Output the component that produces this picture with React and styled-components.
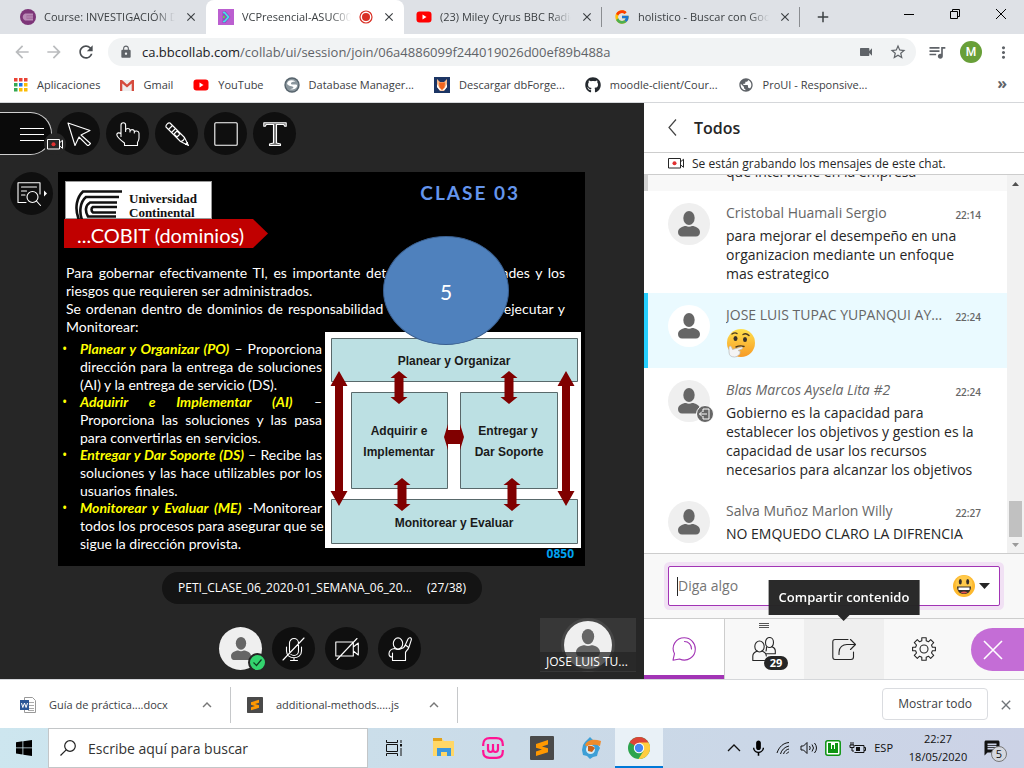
import React from "react";
import styled, { createGlobalStyle, css } from "styled-components";
import {
  MdArrowBack, MdArrowForward, MdRefresh, MdLock, MdVideocam, MdStarBorder,
  MdQueueMusic, MdMoreVert, MdPublic, MdClose, MdAdd, MdMic, MdMessage, MdKeyboardArrowUp,
} from "react-icons/md";
import { FcGoogle } from "react-icons/fc";
import { FaGithub } from "react-icons/fa";

const Global = createGlobalStyle`
  *, *::before, *::after { box-sizing: border-box; }
  body { margin: 0; background: #fff; }
  button, input { font: inherit; color: inherit; border: 0; background: none; padding: 0; margin: 0; outline: 0; }
  button { cursor: pointer; }
  a { color: inherit; text-decoration: none; }
  svg { display: block; flex: none; }
  p, ul, h1, h2 { margin: 0; padding: 0; font-weight: inherit; font-size: inherit; }
`;

const ui = '"Open Sans", "Noto Sans", sans-serif';
const chatFont = '"Open Sans", "Noto Sans", sans-serif';
const slideFont = 'Lato, "Open Sans", sans-serif';
const hair = { fill: "none", stroke: "currentColor", strokeWidth: 1.1, strokeLinejoin: "round", strokeLinecap: "round" };

const Screen = styled.div`
  min-height: 100vh;
  display: flex;
  flex-direction: column;
  font: 11px/16px ${ui};
  color: #3c4043;
`;

/* ---------- browser chrome ---------- */
const TabStrip = styled.div`
  display: flex;
  height: 34px;
  background: #dee1e6;
  padding-left: 8px;
`;
const Tab = styled.div`
  flex: 0 1 198px;
  min-width: 0;
  display: flex;
  align-items: center;
  gap: 8px;
  padding: 0 7px 0 12px;
  ${(p) => p.$active && css`background: #fff; border-radius: 8px 8px 0 0;`}
  ${(p) => p.$divider && css`
    background: linear-gradient(#8a8d91, #8a8d91) right center / 1px 20px no-repeat;
  `}
`;
const TabTitle = styled.span`
  flex: 1;
  min-width: 0;
  overflow: hidden;
  white-space: nowrap;
  mask-image: linear-gradient(to left, transparent, #000 20px);
`;
const IconButton = styled.button`
  display: flex;
  align-items: center;
  justify-content: center;
  width: ${(p) => p.$w || 16}px;
  height: ${(p) => p.$h || 16}px;
  flex: none;
  color: ${(p) => p.$color || "#3c4043"};
`;
const WindowButtons = styled.div`
  margin-left: auto;
  display: flex;
`;
const Toolbar = styled.div`
  display: flex;
  align-items: center;
  height: 36px;
  padding: 0 8px 0 6px;
  background: #fff;
`;
const AddressBar = styled.div`
  flex: 1;
  display: flex;
  align-items: center;
  height: 28px;
  margin: 0 5px 0 6px;
  padding: 0 2px 0 11px;
  border-radius: 14px;
  background: #f1f3f4;
`;
const Url = styled.div`
  flex: 1;
  margin-left: 9px;
  font: 13px/20px ${ui};
  color: #5f6368;
  outline: 0;
  white-space: nowrap;
  overflow: hidden;
  b { font-weight: 400; color: #202124; }
`;
const Profile = styled.button`
  width: 22px;
  height: 22px;
  margin: 0 8px 0 7px;
  border-radius: 50%;
  background: #689f38;
  color: #fff;
  font: 500 12px/22px Roboto, sans-serif;
`;
const Bookmarks = styled.nav`
  display: flex;
  align-items: center;
  height: 33px;
  padding: 0 17px 3px 14px;
  border-bottom: 1px solid #d5d7da;
  gap: 20px;
`;
const Bookmark = styled.a`
  display: flex;
  align-items: center;
  gap: 9px;
  white-space: nowrap;
`;
const More = styled.button`
  margin-left: auto;
  font: 700 16px/16px ${ui};
  color: #5f6368;
  padding-bottom: 3px;
`;

/* ---------- session ---------- */
const Session = styled.main`
  flex: 1;
  display: flex;
  background: #262626;
`;
const Stage = styled.section`
  flex: 1;
  min-width: 0;
  display: flex;
  flex-direction: column;
  color: #fff;
`;
const Tools = styled.div`
  display: flex;
  gap: 6px;
  padding-top: 9px;
`;
const Round = styled.button`
  position: relative;
  display: flex;
  align-items: center;
  justify-content: center;
  flex: none;
  width: 43px;
  height: 43px;
  border-radius: 50%;
  color: #fff;
  background: ${(p) => (p.$light ? "#efefef" : "#0f0f0f")};
`;
const MenuButton = styled.button`
  position: relative;
  width: 52px;
  height: 43px;
  margin-right: -1px;
  padding-left: 20px;
  color: #fff;
  background: #0a0a0a;
  border: 1px solid #cfcfcf;
  border-left: 0;
  border-radius: 0 22px 22px 0;
`;
const RecBadge = styled.span`
  position: absolute;
  z-index: 1;
  left: 44px;
  top: 20px;
  width: 22px;
  height: 22px;
  border-radius: 50%;
  background: #262626;
  display: flex;
  align-items: center;
  justify-content: center;
`;
const SlideRow = styled.div`
  display: flex;
  align-items: flex-start;
  gap: 5px;
  padding: 17px 59px 0 10px;
`;
const Slide = styled.article`
  position: relative;
  flex: 1;
  min-width: 0;
  padding: 9px 4px 6px 6px;
  background: #000;
  font: 14px/18px ${slideFont};
`;
const SlideTop = styled.header`
  display: flex;
  justify-content: space-between;
  padding: 0 61px 0 1px;
  height: 38px;
  overflow: hidden;
`;
const Brand = styled.div`
  display: flex;
  gap: 6px;
  width: 147px;
  padding: 8px 0 0 9px;
  background: #fff;
  border: 1px solid #999;
  color: #111;
  font: 700 13px/14px "Liberation Serif", serif;
`;
const BrandName = styled.span`
  padding-top: 2px;
`;
const ClassTitle = styled.h2`
  font: 700 19px/24px ${slideFont};
  letter-spacing: 2px;
  color: #6495ed;
`;
const Banner = styled.h1`
  width: 204px;
  height: 29px;
  padding-left: 13px;
  background: #c00000;
  clip-path: polygon(0 0, 189px 0, 100% 50%, 189px 100%, 0 100%);
  font: 20px/32px ${slideFont};
  white-space: nowrap;
`;
const Intro = styled.p`
  padding: 16px 16px 0 2px;
`;
const Line = styled.span`
  display: block;
  white-space: nowrap;
  text-align-last: ${(p) => (p.$loose ? "left" : "justify")};
`;
const SlideBody = styled.div`
  display: grid;
  grid-template-columns: minmax(0, 1fr) 256px;
  gap: 3px;
`;
const Domains = styled.ul`
  list-style: none;
  padding-top: 4px;
`;
const Domain = styled.li`
  display: flex;
  & + & { margin-top: -1px; }
  &::before { content: "•"; flex: none; width: 18px; margin-left: -2px; color: #ff0; font-family: "Open Sans", sans-serif; }
  div { flex: 1; min-width: 0; }
  em { font-weight: 700; color: #ff0; }
`;
const Figure = styled.div`
  margin-top: -4px;
`;
const Code = styled.div`
  padding-right: 7px;
  text-align: right;
  font: 700 12px/12px "Open Sans", sans-serif;
  color: #00a2f2;
`;
const Bubble = styled.div`
  position: absolute;
  left: 325px;
  top: 64px;
  width: 126px;
  height: 109px;
  border-radius: 50%;
  border: 1px solid #3a5f8f;
  background: #4f81bd;
  text-align: center;
  font: 21px/110px ${slideFont};
`;
const FileName = styled.button`
  align-self: center;
  display: flex;
  gap: 15px;
  height: 32px;
  margin-top: 6px;
  padding: 0 16px;
  align-items: center;
  border-radius: 16px;
  background: #141414;
  color: #fff;
  font: 12px/16px ${chatFont};
`;
const Controls = styled.div`
  display: grid;
  grid-template-columns: 1fr auto 1fr;
  align-items: start;
  padding: 14px 8px 6px 4px;
`;
const ControlGroup = styled.div`
  grid-column: 2;
  display: flex;
  gap: 10px;
  padding-top: 9px;
`;
const Check = styled.span`
  position: absolute;
  right: -5px;
  bottom: -2px;
  width: 19px;
  height: 19px;
  border-radius: 50%;
  border: 2px solid #262626;
  background: #33d46e;
`;
const Thumb = styled.div`
  justify-self: end;
  width: 96px;
  height: 54px;
  background: #373737;
  display: flex;
  flex-direction: column;
  align-items: center;
  padding-top: 3px;
`;
const ThumbFace = styled.div`
  width: 48px;
  height: 48px;
  border-radius: 50%;
  background: #efefef;
  box-shadow: 0 0 0 3px #464646;
  display: flex;
  justify-content: center;
  padding-top: 8px;
`;
const ThumbName = styled.div`
  position: relative;
  align-self: stretch;
  margin-top: -17px;
  padding-left: 6px;
  background: rgba(38, 38, 38, 0.75);
  font: 12px/19px ${chatFont};
`;

/* ---------- chat ---------- */
const Panel = styled.aside`
  width: 380px;
  flex: none;
  display: flex;
  flex-direction: column;
  background: #fff;
  color: #262626;
  font-family: ${chatFont};
`;
const PanelHead = styled.header`
  display: flex;
  align-items: center;
  gap: 17px;
  height: 50px;
  padding-left: 23px;
  border-bottom: 1px solid #cdcdcd;
  font: 600 16px/22px ${chatFont};
`;
const RecNote = styled.p`
  display: flex;
  align-items: center;
  gap: 8px;
  height: 22px;
  padding-left: 24px;
  border-bottom: 1px solid #cdcdcd;
  font: 12px/16px ${chatFont};
`;
const ChatArea = styled.div`
  flex: 1;
  display: flex;
`;
const Messages = styled.div`
  flex: 1;
  min-width: 0;
`;
const Clipped = styled.div`
  display: flex;
  align-items: flex-end;
  height: 16px;
  overflow: hidden;
  padding: 0 0 10px 78px;
  border-left: 4px solid #d2d2d2;
  background: #f8f8f8;
  font-size: 14px;
  line-height: 19px;
`;
const Message = styled.article`
  display: flex;
  gap: 16px;
  padding: 12px 26px 10px 20px;
  border-left: 4px solid ${(p) => (p.$own ? "#26cfff" : "#fff")};
  background: ${(p) => (p.$own ? "#eafaff" : "#fff")};
`;
const Avatar = styled.div`
  position: relative;
  flex: none;
  width: 42px;
  height: 42px;
  border-radius: 50%;
  background: ${(p) => (p.$own ? "#fff" : "#efefef")};
  display: flex;
  justify-content: center;
  padding-top: 8px;
`;
const LeftBadge = styled.span`
  position: absolute;
  right: -4px;
  bottom: -1px;
  width: 18px;
  height: 18px;
  border-radius: 50%;
  border: 1px solid #fff;
  background: #666;
`;
const MessageMain = styled.div`
  flex: 1;
  min-width: 0;
  font-size: 14px;
  line-height: 19px;
`;
const MessageHead = styled.div`
  display: flex;
  align-items: center;
  gap: 12px;
  height: 19px;
  margin-bottom: 4px;
`;
const Author = styled.span`
  flex: 1;
  min-width: 0;
  overflow: hidden;
  text-overflow: ellipsis;
  white-space: nowrap;
  color: #666;
  font-style: ${(p) => (p.$gone ? "italic" : "normal")};
`;
const Time = styled.time`
  padding-top: 4px;
  font: 600 10px/16px ${chatFont};
  color: #666;
`;
const Scrollbar = styled.div`
  width: 17px;
  display: flex;
  flex-direction: column;
  align-items: center;
  justify-content: space-between;
  padding: 7px 0 6px;
  background: #f1f1f1;
`;
const ScrollEnd = styled.div`
  display: flex;
  flex-direction: column;
  align-items: center;
  gap: 6px;
`;
const ScrollThumb = styled.div`
  width: 13px;
  height: 36px;
  background: #c1c1c1;
`;
const Composer = styled.div`
  padding: 12px 24px;
  border-top: 1px solid #cdcdcd;
  background: #f8f8f8;
`;
const Field = styled.label`
  display: flex;
  align-items: center;
  height: 40px;
  padding: 0 9px 0 8px;
  border: 1px solid #a234b5;
  border-radius: 2px;
  background: #fff;
  box-shadow: 0 0 0 4px #f1e1f4;
  font-size: 14px;
  &::before { content: ""; width: 1px; height: 19px; background: #262626; }
`;
const TextInput = styled.input`
  flex: 1;
  min-width: 0;
  height: 24px;
  line-height: 24px;
  &::placeholder { color: #757575; opacity: 1; }
`;
const EmojiButton = styled.button`
  display: flex;
  align-items: center;
  gap: 4px;
`;
const PanelTabs = styled.div`
  display: flex;
  height: 61px;
  border-top: 1px solid #cdcdcd;
  background: #f8f8f8;
`;
const PanelTab = styled.button`
  position: relative;
  width: 80px;
  display: flex;
  align-items: center;
  justify-content: center;
  color: ${(p) => (p.$active ? "#a234b5" : "#262626")};
  background: ${(p) => (p.$active ? "#fff" : p.$hover ? "#efefef" : "transparent")};
  ${(p) => p.$active && css`box-shadow: inset 0 -4px #a234b5, 1px 0 #cdcdcd;`}
`;
const Count = styled.span`
  position: absolute;
  left: 40px;
  top: 37px;
  width: 24px;
  height: 14px;
  border-radius: 7px;
  background: #262626;
  color: #fff;
  font: 700 11px/14px ${chatFont};
`;
const Grip = styled.span`
  position: absolute;
  top: 4px;
  left: 35px;
  width: 10px;
  height: 5px;
  border-top: 1px solid #555;
  border-bottom: 1px solid #555;
  &::after { content: ""; display: block; height: 1px; margin-top: 1px; background: #555; }
`;
const Tooltip = styled.span`
  position: absolute;
  bottom: 64px;
  left: 50%;
  transform: translateX(-50%);
  padding: 0 10px;
  background: #262626;
  color: #fff;
  white-space: nowrap;
  font: 600 13px/35px ${chatFont};
  opacity: 0.98;
  &::after {
    content: "";
    position: absolute;
    top: 100%;
    left: 50%;
    margin-left: -6px;
    border: 6px solid transparent;
    border-top-color: #262626;
    border-bottom: 0;
  }
`;
const ClosePanel = styled.button`
  margin: 9px 0 0 auto;
  width: 53px;
  height: 43px;
  padding-left: 10px;
  border-radius: 22px 0 0 22px;
  background: #c46dd6;
  color: #fff;
`;

/* ---------- downloads and taskbar ---------- */
const Downloads = styled.div`
  display: flex;
  align-items: center;
  height: 49px;
  padding: 2px 10px 0 0;
  border-top: 1px solid #d5d7da;
  background: #fff;
`;
const Download = styled.div`
  display: flex;
  align-items: center;
  gap: 13px;
  flex: 0 1 ${(p) => p.$w}px;
  height: 36px;
  padding: 0 15px 0 ${(p) => p.$left}px;
  border-right: 1px solid #c6c8ca;
  white-space: nowrap;
  button { margin-left: auto; }
`;
const ShowAll = styled.button`
  height: 32px;
  margin: 0 10px 2px auto;
  padding: 0 15px;
  border: 1px solid #dadce0;
  border-radius: 4px;
  font-size: 12px;
`;
const Taskbar = styled.footer`
  display: flex;
  align-items: stretch;
  height: 40px;
  color: #111;
  background: linear-gradient(100deg, #cde6ef, #cadbe8 50%, #ccd2e6);
`;
const SearchBox = styled.label`
  flex: 0 1 320px;
  display: flex;
  align-items: center;
  gap: 12px;
  padding: 0 11px;
  border: 1px solid #c3c6c8;
  background: #fff;
  font: 14px/20px ${ui};
`;
const SearchInput = styled.input`
  flex: 1;
  min-width: 0;
  height: 24px;
  &::placeholder { color: #333; opacity: 1; }
`;
const TaskButton = styled.button`
  display: flex;
  align-items: center;
  justify-content: center;
  width: ${(p) => p.$w || 49}px;
  ${(p) => p.$active && css`background: #e9f1f7; box-shadow: inset 0 -2px #0078d7;`}
`;
const Tray = styled.div`
  margin-left: auto;
  display: flex;
  align-items: center;
  gap: 8px;
`;
const Clock = styled.time`
  width: 74px;
  text-align: center;
  font: 11px/18px ${ui};
`;
const Notices = styled.button`
  position: relative;
  width: 34px;
  margin-right: 7px;
  color: #111;
`;
const NoticeCount = styled.span`
  position: absolute;
  left: 8px;
  top: 7px;
  width: 16px;
  height: 16px;
  border-radius: 50%;
  border: 1px solid #777;
  background: #d5d8e0;
  font: 11px/14px ${ui};
`;

/* ---------- drawings ---------- */
const Person = ({ w = 22, fill = "#666" }) => (
  <svg width={w} height={w * 1.18} viewBox="0 0 22 26" fill={fill}>
    <ellipse cx="11" cy="7" rx="5.700" ry="7" />
    <path d="M0 21C0 17.500 4.500 15 8 15c1.500.9 4.500.9 6 0C17.500 15 22 17.500 22 21c0 3-1.500 4.500-4 4.500H4C1.500 25.500 0 24 0 21Z" />
  </svg>
);
const RecIcon = ({ color = "#fff" }) => (
  <svg width="16" height="11" viewBox="0 0 16 11" fill="none" stroke={color}>
    <path d="M.5.500h12v9.500H.500zM12.500 3.800l3-2.500v8l-3-2.500" />
    <circle cx="6.500" cy="5.300" r="2" fill="#e03030" stroke="none" />
  </svg>
);
const YouTube = () => (
  <svg width="16" height="16" viewBox="0 0 16 16">
    <rect x=".5" y="2.500" width="15" height="11" rx="3" fill="#f00" />
    <path d="M6.500 5.500v5l4-2.500z" fill="#fff" />
  </svg>
);
const Apps = () => (
  <svg width="14" height="14" viewBox="0 0 14 14">
    {["#ea4335", "#ea4335", "#ea4335", "#34a853", "#1a73e8", "#fbbc04", "#34a853", "#fbbc04", "#fbbc04"].map((c, i) => (
      <rect key={i} x={(i % 3) * 5} y={Math.floor(i / 3) * 5} width="3.500" height="3.500" fill={c} />
    ))}
  </svg>
);
const Gmail = () => (
  <svg width="14" height="16" viewBox="0 0 14 16">
    <path d="M0 3h14v11H0z" fill="#eee" />
    <path d="M0 3h2l5 4.500L12 3h2v11h-2.300V6.500L7 10.500 2.300 6.500V14H0z" fill="#d54b3d" />
  </svg>
);
const Swirl = () => (
  <svg width="16" height="16" viewBox="0 0 16 16">
    <circle cx="8" cy="8" r="7.700" fill="#56636c" />
    <circle cx="8" cy="8" r="6.300" fill="#8b979e" />
    <path d="M3 7c0-4 5-5 8.500-2.500C8 4.500 6.500 5.500 7 7c1.500 1.500 4-.500 6 1 .5 3-3 5.500-7.500 4C9 12 10 11 9 9.800 7 8.800 5 9.500 3 7z" fill="#fff" />
  </svg>
);
const Fox = () => (
  <svg width="16" height="16" viewBox="0 0 16 16">
    <path d="M0 0h16v16H0z" fill="#1c3564" />
    <path d="M3 2l3 3h4l3-3v8l-3 4H6l-3-4z" fill="#f6b98c" />
    <path d="M5 5.500h6l-.5 5L8 13l-2.500-2.500z" fill="#f0641e" />
    <path d="M3 7l2.500 4L8 13.500 5.500 13 3 10zM13 7l-2.500 4L8 13.500l2.500-.500L13 10z" fill="#fff" />
  </svg>
);
const CourseIcon = () => (
  <svg width="16" height="16" viewBox="0 0 16 16">
    <circle cx="8" cy="8" r="8" fill="#7d3578" />
    <path d="M5 4.500h8v7H5C2 10 2 6 5 4.500z" fill="#b98ab6" />
    <path d="M13 6.500H6.500M13 8H6M13 9.500H6.500" stroke="#9a5f96" strokeWidth=".6" />
  </svg>
);
const CollabIcon = () => (
  <svg width="16" height="16" viewBox="0 0 16 16">
    <path d="M0 0h16v16H0z" fill="#bb5fd0" />
    <path d="M4.500 2.500l3-.500 5 6-5 6h-3z" fill="#8f4fc0" />
    <path d="M5 3.500h1.500l4 4.500-4 4.500H5" fill="none" stroke="#40e8e8" strokeWidth="1.700" />
    <path d="M5 6.500l2.500 1.500L5 9.500z" fill="#5be03b" />
  </svg>
);
const Sublime = ({ s = 24 }) => (
  <svg width={s} height={s} viewBox="0 0 24 24">
    <rect width="24" height="24" rx="1" fill="#4a4a4a" />
    <path d="M18 4v4.500l-6 2 6 1.800v4L6 20v-4.500l6-2-6-1.800V8z" fill="#ff9800" />
  </svg>
);
const Univ = () => (
  <svg width="48" height="30" viewBox="0 0 48 30" fill="none" stroke="#111" strokeWidth="2.600">
    <path d="M47 1.500H8C2 7-1 18 4 30M44 7H11C5 12 4 22 7 30M42 12.500H15c-5 3-5 9-2 14h28M42 17H18c-2 1-2 4 0 5.500h23" />
  </svg>
);

const Diagram = () => {
  const box = { fill: "#bce0e3", stroke: "#59696b", strokeWidth: 1 };
  const vert = (x, y, h, hw, hh, bw) => (
    <path
      d={`M${x} ${y}L${x + hw} ${y + hh}H${x + bw}V${y + h - hh}H${x + hw}L${x} ${y + h}L${x - hw} ${y + h - hh}H${x - bw}V${y + hh}H${x - hw}Z`}
      fill="#800000"
    />
  );
  return (
    <svg width="256" height="216" viewBox="0 0 256 216">
      <path d="M0 0h256v216H0z" fill="#fff" />
      <g {...box}>
        <path d="M6.500 6.500h246v43h-246zM26.500 60.500h96v96h-96zM135.500 60.500h97v96h-97zM6.500 167.500h246v44h-246z" />
      </g>
      {vert(14, 39, 135, 8.5, 15, 4)}
      {vert(241, 39, 135, 8.5, 15, 4)}
      {vert(74, 39, 33, 8.5, 7, 4.5)}
      {vert(184, 39, 33, 8.5, 7, 4.5)}
      {vert(77, 146, 33, 8.5, 7, 4.5)}
      {vert(187, 146, 33, 8.5, 7, 4.5)}
      <path d="M119 105l4-13v6h12v-6l4 13-4 13v-6h-12v6z" fill="#800000" />
      <g fontFamily='"Liberation Sans", sans-serif' fontWeight="700" fontSize="12" textAnchor="middle" fill="#1a1a1a">
        <text x="129" y="33">Planear y Organizar</text>
        <text x="74" y="103">Adquirir e</text>
        <text x="74" y="124">Implementar</text>
        <text x="183" y="103">Entregar y</text>
        <text x="184" y="124">Dar Soporte</text>
        <text x="129" y="195">Monitorear y Evaluar</text>
      </g>
    </svg>
  );
};

const tools = [
  ["Seleccionar", <path d="M1 1l22 7.500-9 4.500 9.500 8.500-2.500 2.500-9-9L8 23.500z" />],
  ["Apuntador", <path d="M5 14.500V3a2.300 2.300 0 0 1 4.600 0v6.500V8c.6-2 4-2 4.400 0v2-1c.6-1.800 3.800-1.800 4.300 0v2-1c.7-1.500 4.200-1.300 4.700 1V16c0 2-.8 3.500-1.500 4.500V23.500H8.500v-2.500C5 18.500 1 14.500.8 12.800.8 10.800 3.500 10 5 12" />],
  ["Lápiz", <><path d="M1 5C.500 3 3 .500 5 1L19.500 15.500l4 8-8-4z" /><path d="M3.500 7.500l4-4M15.500 19.500c2 0 4-2 4-4M6.500 10.500l4-4M9 12l3 3 3-3-3-3zM20.500 22.500l2-2" /></>],
  ["Forma", <rect x=".8" y=".8" width="22.400" height="22.400" rx="1" />],
];

const Fig = ({ children, s = 24 }) => <svg width={s} height={s} viewBox="0 0 24 24" {...hair}>{children}</svg>;

const Thinking = () => (
  <svg width="30" height="30" viewBox="0 0 30 30">
    <defs>
      <linearGradient id="th" x1="0" y1="0" x2="0" y2="1"><stop offset="0" stopColor="#ffe04d" /><stop offset="1" stopColor="#f79a26" /></linearGradient>
    </defs>
    <circle cx="15" cy="15" r="14" fill="url(#th)" />
    <ellipse cx="9.500" cy="10.500" rx="2" ry="2.600" fill="#38302a" />
    <ellipse cx="19" cy="11.500" rx="2" ry="2.600" fill="#38302a" />
    <path d="M6 6q3-2 5-.500M17 6.500q3-2 6 1M10 19q4-2 8-.500" fill="none" stroke="#4b3a20" strokeWidth="1.400" strokeLinecap="round" />
    <path d="M3 19q1-2 2.500 0l1 2.500 9-2.500q2 .500.500 2l-4 1.500q3 .5 2 2 .5 2-1.500 2.500-1 2-4 2Q3 29 3 24z" fill="#f4f4f4" stroke="#b9b9b9" strokeWidth=".7" />
  </svg>
);
const Grin = () => (
  <svg width="22" height="22" viewBox="0 0 22 22">
    <circle cx="11" cy="11" r="11" fill="#fdb92e" />
    <circle cx="11" cy="9" r="8.500" fill="#ffc94a" />
    <ellipse cx="7.300" cy="6.800" rx="1.500" ry="2.700" fill="#38302a" />
    <ellipse cx="14.700" cy="6.800" rx="1.500" ry="2.700" fill="#38302a" />
    <path d="M4 11.500h14c0 5-3 7.500-7 7.500s-7-2.500-7-7.500z" fill="#38302a" />
    <path d="M5.500 12.500h11v2.500h-11z" fill="#fff" />
    <path d="M7.500 17.500q3.500-2 7 0-3.500 2-7 0z" fill="#e8574f" />
  </svg>
);
const Chrome = () => (
  <svg width="22" height="22" viewBox="0 0 22 22">
    <circle cx="11" cy="11" r="11" fill="#2da44e" />
    <path d="M11 11L1.500 5.500A11 11 0 0 1 20.500 5.500z" fill="#dc4437" />
    <path d="M11 5.500h9.500A11 11 0 0 1 10.500 22l5-8z" fill="#ffcd40" />
    <circle cx="11" cy="11" r="5.200" fill="#fff" />
    <circle cx="11" cy="11" r="4.200" fill="#4587f3" />
  </svg>
);

const chat = [
  { who: "Cristobal Huamali Sergio", at: "22:14", text: "para mejorar el desempeño en una organizacion mediante un enfoque mas estrategico" },
  { who: "JOSE LUIS TUPAC YUPANQUI AYALA", at: "22:24", own: true },
  { who: "Blas Marcos Aysela Lita #2", at: "22:24", gone: true, text: "Gobierno es la capacidad para establecer los objetivos y gestion es la capacidad de usar los recursos necesarios para alcanzar los objetivos" },
  { who: "Salva Muñoz Marlon Willy", at: "22:27", text: "NO EMQUEDO CLARO LA DIFRENCIA" },
];

const domains = [
  ["Planear y Organizar (PO)", "– Proporciona", "dirección para la entrega de soluciones", "(AI) y la entrega de servicio (DS)."],
  ["Adquirir e Implementar (AI)", "–", "Proporciona las soluciones y las pasa", "para convertirlas en servicios."],
  ["Entregar y Dar Soporte (DS)", "– Recibe las", "soluciones y las hace utilizables por los", "usuarios finales."],
  ["Monitorear y Evaluar (ME)", "-Monitorear", "todos los procesos para asegurar que se", "sigue la dirección provista."],
];

const bookmarks = [
  [<Apps />, "Aplicaciones"],
  [<Gmail />, "Gmail"],
  [<YouTube />, "YouTube"],
  [<Swirl />, "Database Manager..."],
  [<Fox />, "Descargar dbForge..."],
  [<FaGithub size={16} color="#24292e" />, "moodle-client/Cour..."],
  [<MdPublic size={16} color="#5f6368" />, "ProUI - Responsive..."],
];

function CloseTab() {
  return <IconButton aria-label="Cerrar pestaña"><MdClose size={14} stroke="currentColor" /></IconButton>;
}

function BrowserTop() {
  return (
    <>
      <TabStrip>
        <Tab>
          <CourseIcon /><TabTitle>Course: INVESTIGACIÓN DE</TabTitle>
          <CloseTab />
        </Tab>
        <Tab $active>
          <CollabIcon /><TabTitle>VCPresencial-ASUC00</TabTitle>
          <svg width="14" height="14" viewBox="0 0 14 14"><circle cx="7" cy="7" r="6" fill="none" stroke="#d93025" strokeWidth="1.200" /><circle cx="7" cy="7" r="4" fill="#d93025" /></svg>
          <CloseTab />
        </Tab>
        <Tab $divider>
          <YouTube /><TabTitle>(23) Miley Cyrus BBC Radio</TabTitle>
          <CloseTab />
        </Tab>
        <Tab $divider>
          <FcGoogle size={16} /><TabTitle>holistico - Buscar con Google</TabTitle>
          <CloseTab />
        </Tab>
        <IconButton $w={46} $h={34} aria-label="Nueva pestaña"><MdAdd size={18} /></IconButton>
        <WindowButtons>
          <IconButton $w={46} $h={28} aria-label="Minimizar"><svg width="10" height="10" stroke="#000"><path d="M0 5.500h10" /></svg></IconButton>
          <IconButton $w={46} $h={28} aria-label="Restaurar"><svg width="10" height="10" stroke="#000" fill="none"><path d="M.5 2.500h7v7h-7zM2.500 2.500v-2h7v7h-2" /></svg></IconButton>
          <IconButton $w={46} $h={28} aria-label="Cerrar"><svg width="10" height="10" stroke="#000"><path d="M0 0l10 10M10 0L0 10" /></svg></IconButton>
        </WindowButtons>
      </TabStrip>
      <Toolbar>
        <IconButton $w={32} $h={32} $color="#babcbe" aria-label="Atrás"><MdArrowBack size={20} /></IconButton>
        <IconButton $w={32} $h={32} $color="#babcbe" aria-label="Adelante"><MdArrowForward size={20} /></IconButton>
        <IconButton $w={32} $h={32} $color="#4a4e52" aria-label="Recargar"><MdRefresh size={20} /></IconButton>
        <AddressBar>
          <MdLock size={14} color="#5f6368" />
          <Url role="textbox" aria-label="Dirección" contentEditable suppressContentEditableWarning spellCheck={false}>
            <b>ca.bbcollab.com</b>/collab/ui/session/join/06a4886099f244019026d00ef89b488a
          </Url>
          <IconButton $w={32} $h={24} $color="#5f6368" aria-label="Cámara"><MdVideocam size={16} /></IconButton>
          <IconButton $w={32} $h={24} $color="#5f6368" aria-label="Favorito"><MdStarBorder size={18} /></IconButton>
        </AddressBar>
        <IconButton $w={32} $h={32} $color="#5f6368" aria-label="Medios"><MdQueueMusic size={20} /></IconButton>
        <Profile>M</Profile>
        <IconButton $w={26} $h={32} $color="#5f6368" aria-label="Menú"><MdMoreVert size={19} /></IconButton>
      </Toolbar>
      <Bookmarks>
        {bookmarks.map(([icon, name]) => <Bookmark href="#" key={name}>{icon}{name}</Bookmark>)}
        <More>»</More>
      </Bookmarks>
    </>
  );
}

function Lesson() {
  return (
    <Stage>
      <Tools>
        <MenuButton aria-label="Menú de la sesión">
          <svg width="24" height="14" viewBox="0 0 24 14" stroke="#fff"><path d="M0 1.500h24M0 7.500h24M0 13.500h24" /></svg>
          <RecBadge><RecIcon /></RecBadge>
        </MenuButton>
        {tools.map(([name, shape]) => <Round key={name} aria-label={name}><Fig>{shape}</Fig></Round>)}
        <Round aria-label="Texto">
          <svg width="24" height="24" viewBox="0 0 24 24" {...hair}>
            <path d="M.8.800h22.400v3.500h-1.500l-1-1.800h-7.200v18.500l4 1v1.500H6.500V22l4-1V2.500H3.300l-1 1.800H.8z" fill="#777" />
          </svg>
        </Round>
      </Tools>
      <SlideRow>
        <Round aria-label="Buscar diapositiva">
          <svg width="30" height="24" viewBox="0 0 30 24" {...hair}>
            <path d="M9 20.500H1V.800h22V12M4.500 5h15M4.500 9h5M4.500 13h3.500M19.500 19l4 4.500" />
            <circle cx="15.500" cy="15" r="5.500" />
            <path d="M27 8.500v6l3-3z" fill="#fff" stroke="none" />
          </svg>
        </Round>
        <Slide>
          <SlideTop>
            <Brand><Univ /><BrandName>Universidad<br />Continental</BrandName></Brand>
            <ClassTitle>CLASE 03</ClassTitle>
          </SlideTop>
          <Banner>...COBIT (dominios)</Banner>
          <Intro>
            <Line>Para gobernar efectivamente TI, es importante determinar las actividades y los</Line>
            <Line $loose>riesgos que requieren ser administrados.</Line>
            <Line>Se ordenan dentro de dominios de responsabilidad Planear, construir, ejecutar y</Line>
            <Line $loose>Monitorear:</Line>
          </Intro>
          <SlideBody>
            <Domains>
              {domains.map(([name, rest, second, last]) => (
                <Domain key={name}>
                  <div>
                    <Line><em>{name}</em> {rest}</Line>
                    <Line>{second}</Line>
                    <Line $loose>{last}</Line>
                  </div>
                </Domain>
              ))}
            </Domains>
            <Figure><Diagram /><Code>0850</Code></Figure>
          </SlideBody>
          <Bubble>5</Bubble>
        </Slide>
      </SlideRow>
      <FileName><span>PETI_CLASE_06_2020-01_SEMANA_06_20...</span><span>(27/38)</span></FileName>
      <Controls>
        <ControlGroup>
          <Round $light aria-label="Mi perfil">
            <Person w={20} />
            <Check><svg width="15" height="15" viewBox="0 0 15 15" fill="none" stroke="#103d20" strokeWidth="1.200"><path d="M3.500 7.500l3 3 5-6" /></svg></Check>
          </Round>
          <Round aria-label="Activar audio"><Fig><path d="M7.500 6a4.500 4.500 0 0 1 9 0v8a4.500 4.500 0 0 1-9 0zM4.500 10v4c0 9 15 9 15 0v-4M12 21v2.500M8.500 23.500h7M22 1L1 23" /></Fig></Round>
          <Round aria-label="Activar video"><Fig><path d="M.8 5h17.500v14H.8zM18.300 10l5-4v12l-5-4M22 1.500L2 22.500" /></Fig></Round>
          <Round aria-label="Levantar la mano"><Fig><ellipse cx="10" cy="6.500" rx="4.700" ry="5.600" /><path d="M4.500 16v3.500M4.500 20c-2.500 0-3.500-1-3.500-3 0-3 2-5 5.500-5.500 2.500 1.500 4.500 1.500 7 0 2-.5 3.500-2 4-4L20 2c1-2 4-1.500 3.300.8L21 10c-1 3-3 4-3.500 5.500v8H4.500V20M17.500 8l2.500 2" /></Fig></Round>
        </ControlGroup>
        <Thumb>
          <ThumbFace><Person w={24} /></ThumbFace>
          <ThumbName>JOSE LUIS TU...</ThumbName>
        </Thumb>
      </Controls>
    </Stage>
  );
}

function ChatPanel() {
  return (
    <Panel>
      <PanelHead>
        <IconButton $w={10} $h={20} aria-label="Volver"><svg width="9" height="17" viewBox="0 0 9 17" fill="none" stroke="#444" strokeWidth="1.200"><path d="M8 .5L1 8.500l7 8" /></svg></IconButton>
        <h2>Todos</h2>
      </PanelHead>
      <RecNote><RecIcon color="#262626" />Se están grabando los mensajes de este chat.</RecNote>
      <ChatArea>
        <Messages>
          <Clipped>que interviene en la empresa</Clipped>
          {chat.map((m) => (
            <Message key={m.who} $own={m.own}>
              <Avatar $own={m.own}>
                <Person />
                {m.gone && <LeftBadge><svg width="16" height="16" viewBox="0 0 16 16" fill="none" stroke="#fff"><path d="M6 6V3h6v10H6v-3M10 8H2.500M5 5.500L2.500 8 5 10.500" /></svg></LeftBadge>}
              </Avatar>
              <MessageMain>
                <MessageHead><Author $gone={m.gone}>{m.who}</Author><Time>{m.at}</Time></MessageHead>
                {m.own ? <Thinking /> : <p>{m.text}</p>}
              </MessageMain>
            </Message>
          ))}
        </Messages>
        <Scrollbar>
          <svg width="7" height="4"><path d="M0 4l3.500-4L7 4z" fill="#505050" /></svg>
          <ScrollEnd><ScrollThumb /><svg width="7" height="4"><path d="M0 0h7L3.500 4z" fill="#9a9a9a" /></svg></ScrollEnd>
        </Scrollbar>
      </ChatArea>
      <Composer>
        <Field>
          <TextInput placeholder="Diga algo" aria-label="Diga algo" />
          <EmojiButton aria-label="Emojis"><Grin /><svg width="11" height="6"><path d="M0 0h11L5.500 6z" fill="#262626" /></svg></EmojiButton>
        </Field>
      </Composer>
      <PanelTabs>
        <PanelTab $active aria-label="Chat"><Fig><path d="M1 23.200l1.500-6.500C-1.500 9 4 .8 12.300.8 18.500.8 23.300 5.800 23.300 12c0 8-8 13.500-15.800 10z M12.500 4.500c4 0 7 3 7 7.500" /></Fig></PanelTab>
        <PanelTab aria-label="Asistentes">
          <Grip />
          <Fig><ellipse cx="7.500" cy="9.500" rx="4.700" ry="5.500" /><ellipse cx="17.500" cy="5.500" rx="4" ry="5" /><path d="M12.500 23.500H.8V19c0-3 2-4 4.500-5M9.800 14c3 1 4.500 2 4.500 5M14.500 10c0 3-.5 4-.5 4M20 9.800c2.500 1 3.300 2 3.300 4v3H14" /></Fig>
          <Count>29</Count>
        </PanelTab>
        <PanelTab $hover aria-label="Compartir contenido">
          <Fig><path d="M16 2.500H3Q.8 2.500.8 5v15q0 2.500 2.200 2.500h16q2.500 0 2.500-2.500v-5M7 17.500v-2C7 10 11 7.500 15 7.500h8.500M18.500 2.500l5 5-5 5" /></Fig>
          <Tooltip>Compartir contenido</Tooltip>
        </PanelTab>
        <PanelTab aria-label="Mi configuración">
          <Fig><circle cx="12" cy="12" r="4" /><path d="M9.800.8h4.400v3l2.200 1 2.300-2.200 3 3L19.500 8l.9 2.200h3v3.600h-3l-.9 2.200 2.200 2.400-3 3-2.300-2.200-2.200 1v3H9.800v-3l-2.200-1-2.300 2.200-3-3L4.500 16l-.9-2.200h-3v-3.600h3L4.500 8 2.300 5.600l3-3 2.300 2.200 2.200-1z" /></Fig>
        </PanelTab>
        <ClosePanel aria-label="Cerrar panel"><svg width="24" height="22" viewBox="0 0 24 22" stroke="#fff" strokeWidth="1.600"><path d="M3 2l18 18M21 2L3 20" /></svg></ClosePanel>
      </PanelTabs>
    </Panel>
  );
}

function DesktopBottom() {
  return (
    <>
      <Downloads>
        <Download $w={231} $left={20}>
          <svg width="16" height="16" viewBox="0 0 16 16"><path d="M4.500.5h8l3 3v12h-11z" fill="#fff" stroke="#999" /><path d="M8 5.500h6M8 8.500h6M8 11.500h6M8 13.500h6" stroke="#aaa" /><path d="M0 3h9v10H0z" fill="#2b5797" /><path d="M1.500 6l1.300 4.500L4.500 6l1.600 4.500L7.500 6" fill="none" stroke="#fff" /></svg>
          <span>Guía de práctica....docx</span>
          <IconButton aria-label="Opciones"><MdKeyboardArrowUp size={18} color="#777" /></IconButton>
        </Download>
        <Download $w={227} $left={16}>
          <Sublime s={16} />
          <span>additional-methods.....js</span>
          <IconButton aria-label="Opciones"><MdKeyboardArrowUp size={18} color="#777" /></IconButton>
        </Download>
        <ShowAll>Mostrar todo</ShowAll>
        <IconButton aria-label="Cerrar"><MdClose size={16} color="#70757a" /></IconButton>
      </Downloads>
      <Taskbar>
        <TaskButton $w={48} aria-label="Inicio"><svg width="16" height="16" viewBox="0 0 16 16"><path d="M0 2.200l6.500-.9v6.200H0zM7.300 1.200L16 0v7.500H7.300zM0 8.300h6.500v6.200L0 13.600zM7.300 8.300H16V16l-8.700-1.200z" fill="#000" /></svg></TaskButton>
        <SearchBox>
          <svg width="16" height="16" viewBox="0 0 16 16" fill="none" stroke="#222" strokeWidth="1.200"><circle cx="10" cy="6" r="5.300" /><path d="M6.200 9.800L.5 15.500" /></svg>
          <SearchInput placeholder="Escribe aquí para buscar" aria-label="Buscar" />
        </SearchBox>
        <TaskButton $w={51} aria-label="Vista de tareas"><svg width="16" height="16" viewBox="0 0 16 16" fill="none" stroke="#111"><path d="M.5 4.500h11v7H.5zM.5 0v2.500h11V0M.5 16v-2.500h11V16M15 0v3M15 8v8" /><path d="M14 4h2v2.500h-2z" fill="#111" stroke="none" /></svg></TaskButton>
        <TaskButton aria-label="Explorador"><svg width="22" height="20" viewBox="0 0 22 20"><path d="M0 1h9l2 2h10v15H0z" fill="#ffd766" /><path d="M0 0h9v3H0z" fill="#e3a21a" /><path d="M4 18v-8h14v8h-4v-4H8v4z" fill="#3b97dd" /></svg></TaskButton>
        <TaskButton aria-label="WampServer"><svg width="22" height="22" viewBox="0 0 22 22" fill="none" stroke="#ff1493" strokeWidth="2.200"><path d="M1.200 9V7.500c0-4 2.500-6.300 6.300-6.300h7c3.800 0 6.300 2.300 6.300 6.300V9M1.200 13v1.500c0 4 2.500 6.300 6.300 6.300h7c3.800 0 6.300-2.300 6.300-6.300V13M6 7v5c0 2 1 3 2.500 3S11 14 11 12V7v5c0 2 1 3 2.500 3S16 14 16 12V7" /></svg></TaskButton>
        <TaskButton aria-label="Sublime Text"><Sublime /></TaskButton>
        <TaskButton aria-label="dbForge"><svg width="22" height="22" viewBox="0 0 22 22"><path d="M10 0l3 3 4 1 1 4 2 3-2 4-1 4-4 1-3 2-3-3-4-1-1-5 1-5 2-3 2-2z" fill="#3d9fd6" /><path d="M5 8c3-6 9-6 16-4l-1 5c-6-2-9-2-11 2z" fill="#ef8b2c" /><circle cx="10.500" cy="12.500" r="4.500" fill="#d9ecf5" /><path d="M8 9q4-1 7 2l-3 4-4-1z" fill="#c8601a" /></svg></TaskButton>
        <TaskButton $w={48} $active aria-label="Chrome"><Chrome /></TaskButton>
        <Tray>
          <svg width="14" height="14" viewBox="0 0 14 14" fill="none" stroke="#111" strokeWidth="1.300"><path d="M1 10l6-6 6 6" /></svg>
          <MdMic size={19} color="#000" />
          <svg width="16" height="14" viewBox="0 0 16 14" fill="none" stroke="#111"><path d="M1 12C3 6 7 2 13 1.500M4.500 13c1-4 4-7 8.500-8M7.500 13c1-3 3-4.500 5.500-5M10.500 13c.5-1 1.500-2 2.500-2" /></svg>
          <svg width="17" height="14" viewBox="0 0 17 14" fill="none" stroke="#111"><path d="M1 5h2.500L7 1.500v11L3.500 9H1zM9.500 5q1.500 2 0 4M12 3.500q3 3.500 0 7M14.500 2q4 5 0 10" /></svg>
          <svg width="16" height="16" viewBox="0 0 16 16"><rect x=".8" y=".8" width="14.400" height="14.400" rx="2" fill="#fff" stroke="#0d9412" strokeWidth="1.500" /><path d="M3 3h3v6h1V5h2v4h1V3h3v10H3z" fill="#0d9412" /></svg>
          <svg width="17" height="12" viewBox="0 0 17 12" fill="none" stroke="#111"><path d="M5.500 3.500h9.500v7H5.500M15 5.500h1.500v3H15M1 3h4v2.500H1zM2 0v3M4 0v3M3 5.500V9h2" /><path d="M7 5h4v4H7z" fill="#111" stroke="none" /></svg>
          <span>ESP</span>
          <Clock>22:27<br />18/05/2020</Clock>
          <Notices aria-label="Notificaciones"><MdMessage size={18} /><NoticeCount>5</NoticeCount></Notices>
        </Tray>
      </Taskbar>
    </>
  );
}

export default function App() {
  return (
    <Screen>
      <Global />
      <BrowserTop />
      <Session>
        <Lesson />
        <ChatPanel />
      </Session>
      <DesktopBottom />
    </Screen>
  );
}
